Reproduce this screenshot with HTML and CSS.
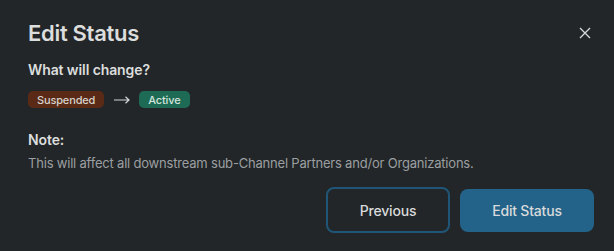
FILE: index.html
```html
<!DOCTYPE html>
<html>
<head>
<meta charset="utf-8">
<link rel="stylesheet" href="styles.css">
</head>
<body>
<div class="modal">
  <div class="header">
    <h1 class="title">Edit Status</h1>
    <button class="close" aria-label="Close">
      <svg width="12" height="12" viewBox="0 0 12 12"><path d="M1 1L11 11M11 1L1 11" stroke="#d4d6d7" stroke-width="1.4" fill="none"/></svg>
    </button>
  </div>
  <div class="section">
    <h2 class="label">What will change?</h2>
    <div class="change">
      <span class="badge badge-suspended">Suspended</span>
      <svg class="arrow" width="16" height="8" viewBox="0 0 16 8"><path d="M0 4H15M11.5 0.8L15 4L11.5 7.2" stroke="#d4d6d7" stroke-width="1.2" fill="none"/></svg>
      <span class="badge badge-active">Active</span>
    </div>
  </div>
  <div class="note">
    <h2 class="label">Note:</h2>
    <p class="desc">This will affect all downstream sub-Channel Partners and/or Organizations.</p>
  </div>
  <div class="actions">
    <button class="btn btn-outline">Previous</button>
    <button class="btn btn-primary">Edit Status</button>
  </div>
</div>
</body>
</html>
```
FILE: styles.css
```css
* { box-sizing: border-box; }
html, body { margin: 0; padding: 0; }
body {
  background: #222628;
  font-family: Inter, "Noto Sans", sans-serif;
  color: #d9dadb;
  width: 614px;
  height: 251px;
  overflow: hidden;
}
.modal {
  padding: 18px 20px 0 28px;
  display: flex;
  flex-direction: column;
}
.header {
  display: flex;
  justify-content: space-between;
  align-items: center;
  height: 30px;
}
.title {
  margin: 0;
  font-size: 22px;
  font-weight: 600;
  letter-spacing: -0.3px;
  color: #dcdddd;
}
.close {
  background: none;
  border: none;
  padding: 0;
  width: 12px;
  height: 12px;
  margin-right: 3px;
  display: flex;
}
.section { margin-top: 12px; }
.label {
  margin: 0;
  font-size: 14px;
  font-weight: 600;
  color: #dcdddd;
  letter-spacing: -0.1px;
  line-height: 20px;
}
.change {
  display: flex;
  align-items: center;
  margin-top: 11px;
}
.badge {
  display: inline-flex;
  align-items: center;
  height: 17px;
  padding: 0 9px;
  border-radius: 5px;
  font-size: 11px;
  font-weight: 500;
  color: #d7d2cd;
  letter-spacing: -0.15px;
}
.badge-suspended { background: #5a2a17; }
.badge-active { background: #1e6b55; color: #d3e4dd; }
.arrow { margin: 0 9px 0 10px; }
.note { margin-top: 22px; }
.desc {
  margin: 5px 0 0;
  font-size: 13px;
  color: #9c9fa1;
  letter-spacing: -0.2px;
  line-height: 16px;
}
.actions {
  display: flex;
  justify-content: flex-end;
  align-items: center;
  gap: 10px;
  margin-top: 16px;
}
.btn {
  font-family: Inter, "Noto Sans", sans-serif;
  font-size: 14px;
  font-weight: 500;
  color: #d9dadb;
  border-radius: 8px;
  letter-spacing: -0.2px;
}
.btn-outline {
  width: 124px;
  height: 46px;
  background: transparent;
  border: 2px solid #1f5677;
}
.btn-primary {
  width: 134px;
  height: 43px;
  background: #236389;
  border: none;
}
```
